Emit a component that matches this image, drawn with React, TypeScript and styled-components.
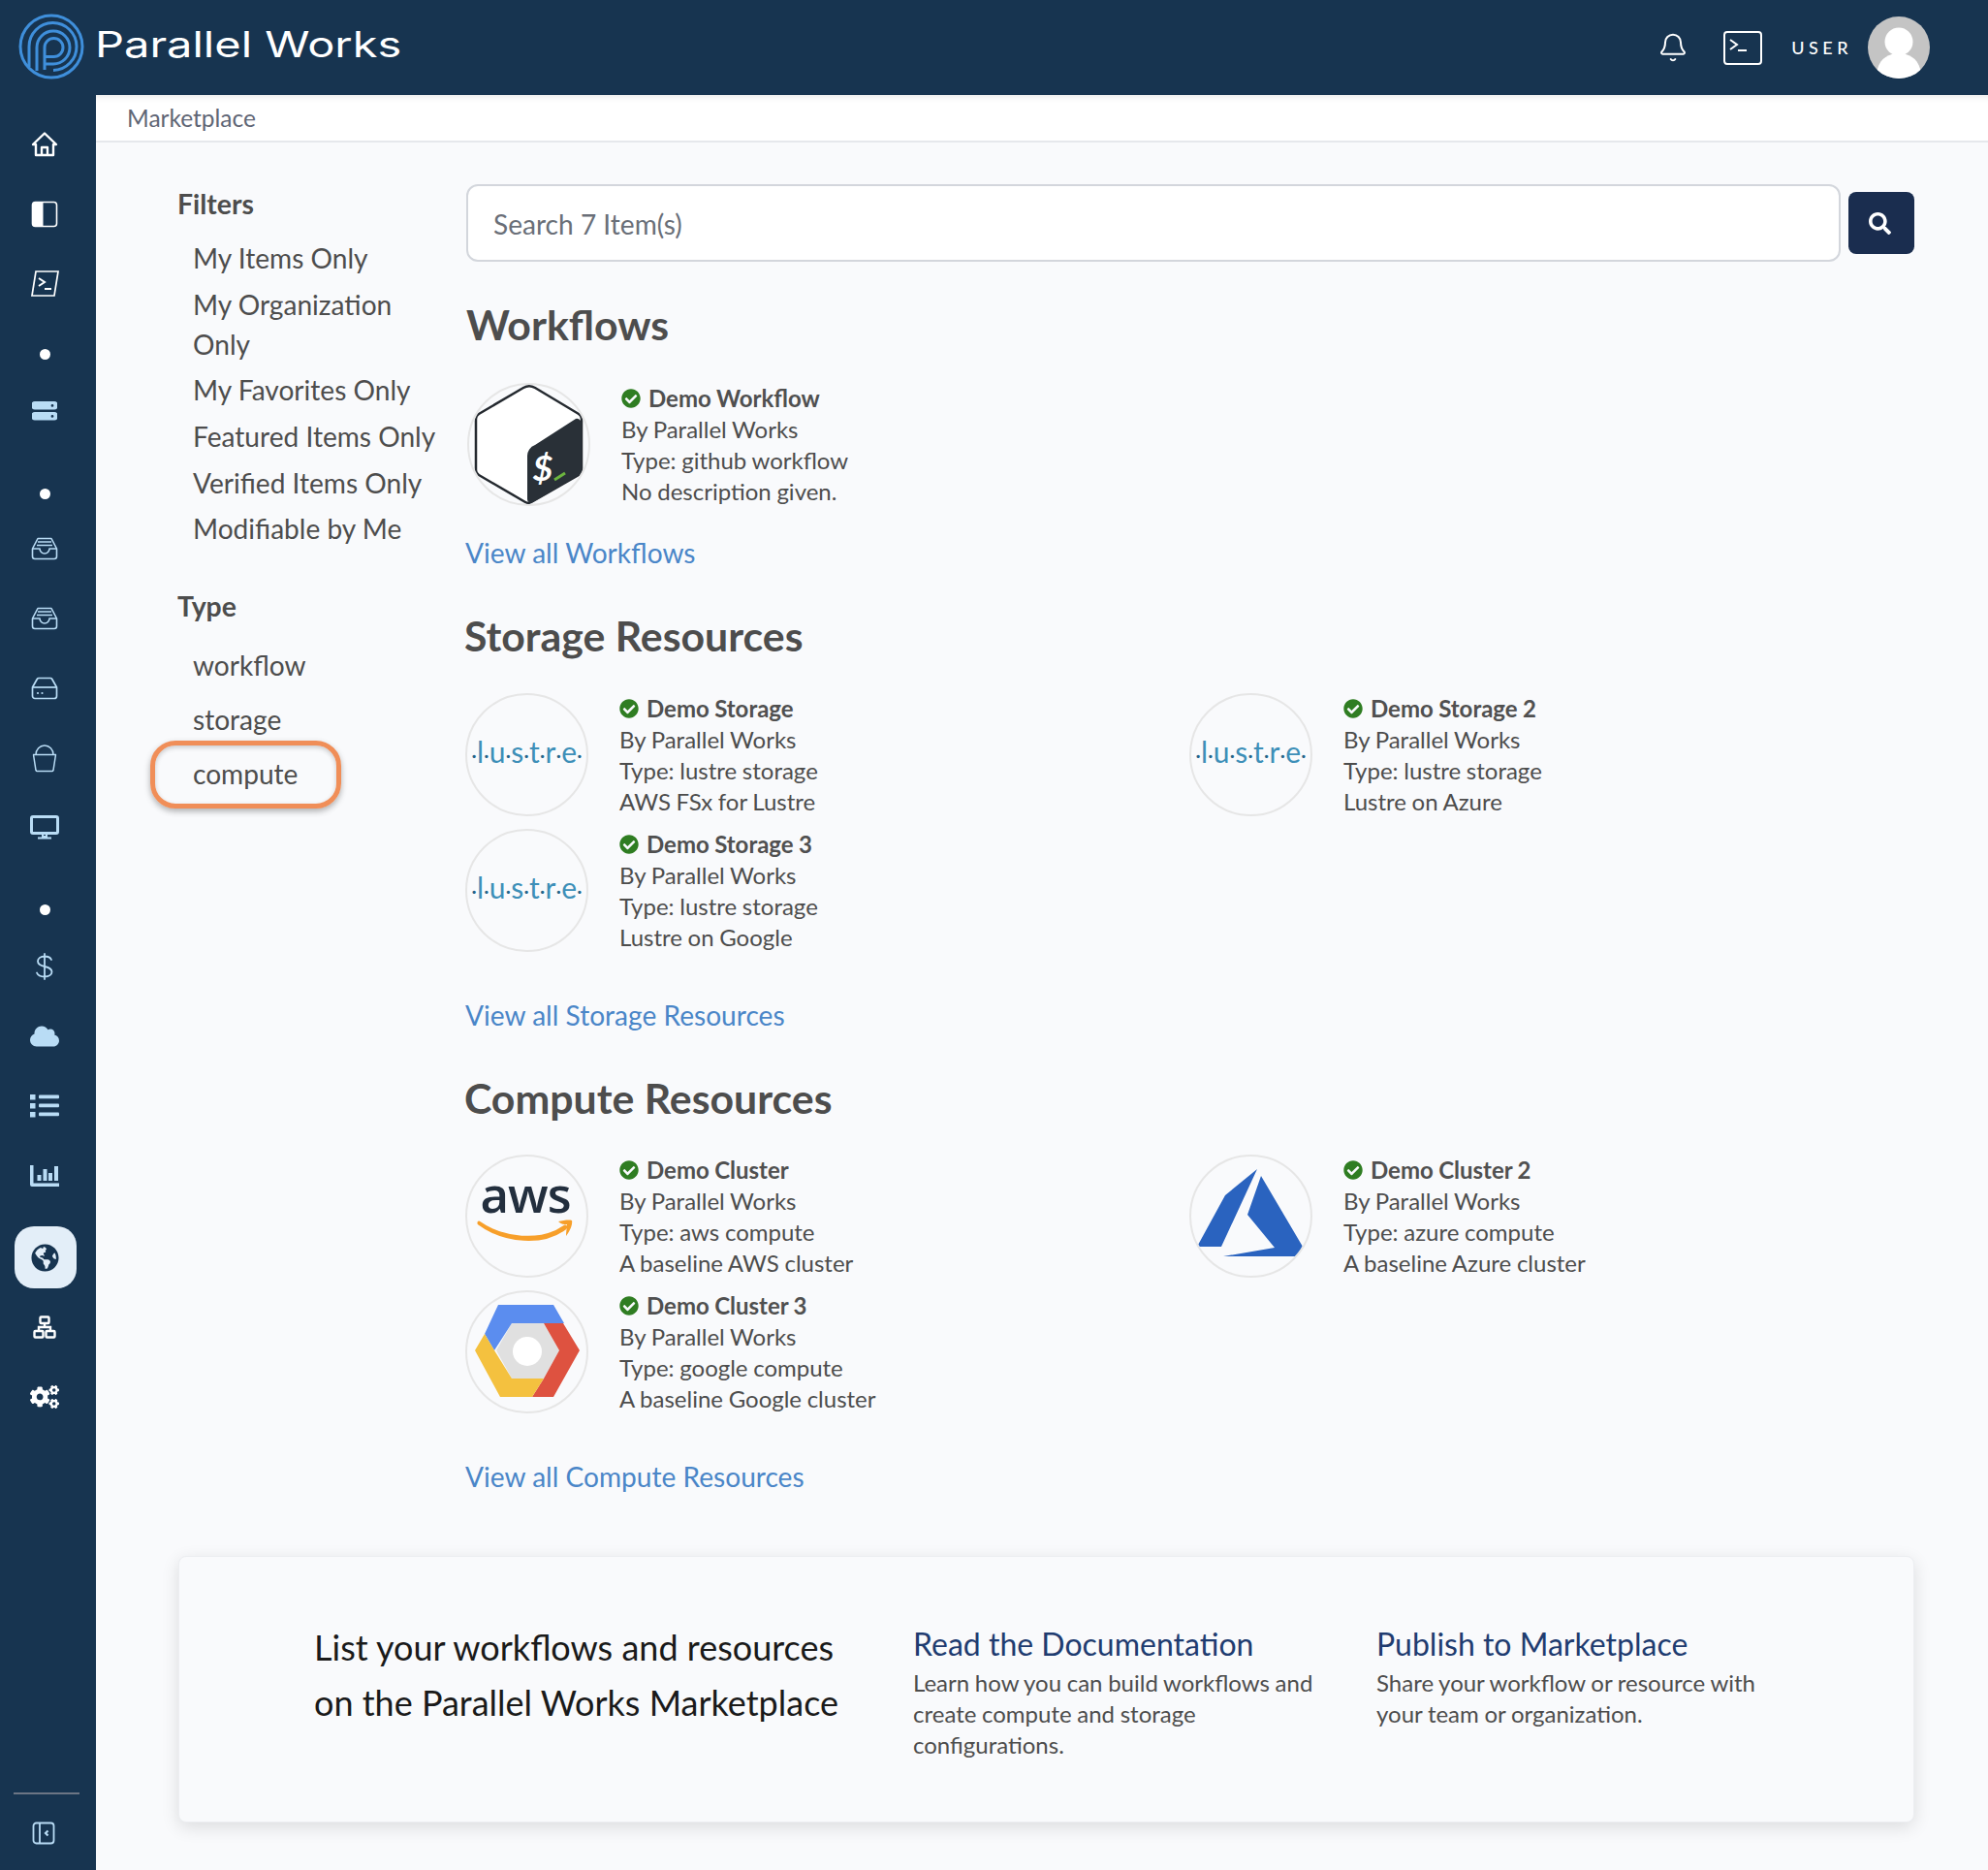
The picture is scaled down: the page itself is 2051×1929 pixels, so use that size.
import React from "react";
import styled, { createGlobalStyle } from "styled-components";
import { Bell } from "lucide-react";
import { FaCheckCircle, FaCloud, FaCogs, FaGlobeAmericas, FaSearch } from "react-icons/fa";

const GlobalStyle = createGlobalStyle`
  html, body {
    margin: 0;
    padding: 0;
    background: #f9fafc;
    font-family: "Lato", "Noto Sans", sans-serif;
  }
  *, *::before, *::after {
    box-sizing: border-box;
  }
`;

const Shell = styled.div`
  width: 2051px;
  height: 1929px;
  display: flex;
  flex-direction: column;
  overflow: hidden;
`;

const TopBar = styled.header`
  height: 98px;
  flex: none;
  background: #173450;
  display: flex;
  align-items: center;
  padding: 0 60px 0 19px;
`;

const LogoMark = styled.svg`
  width: 68px;
  height: 68px;
  flex: none;
  margin-top: -2px;
`;

const LogoText = styled.span`
  margin: -7px 0 0 11px;
  font-family: "Inter", sans-serif;
  font-size: 37px;
  font-weight: 400;
  color: #fff;
  white-space: nowrap;
  display: inline-block;
  transform: scaleX(1.27);
  transform-origin: left center;
`;

const TopRight = styled.div`
  margin-left: auto;
  display: flex;
  align-items: center;
`;

const BellButton = styled.div`
  color: #fff;
  display: flex;
  margin-right: 36px;
`;

const TerminalBox = styled.div`
  width: 40px;
  height: 35px;
  border: 2px solid #fff;
  border-radius: 4px;
  margin-right: 30px;
  display: flex;
`;

const UserName = styled.span`
  color: #fff;
  font-size: 18px;
  font-weight: 500;
  letter-spacing: 4.5px;
  margin-right: 16px;
`;

const Avatar = styled.div`
  width: 64px;
  height: 64px;
  border-radius: 50%;
  background: #c4c4c4;
  overflow: hidden;
`;

const Body = styled.div`
  flex: 1;
  display: flex;
  min-height: 0;
`;

const SideBar = styled.nav`
  width: 99px;
  flex: none;
  background: #173450;
  padding-top: 15px;
  display: flex;
  flex-direction: column;
  align-items: stretch;
`;

const NavRow = styled.div<{ $color?: string }>`
  height: 72px;
  width: 92px;
  display: flex;
  align-items: center;
  justify-content: center;
  color: ${(p) => p.$color || "#b9dcf5"};
`;

const NavDot = styled.div<{ $top: number; $bottom: number }>`
  width: 11px;
  height: 11px;
  border-radius: 50%;
  background: #fff;
  margin: ${(p) => p.$top}px 0 ${(p) => p.$bottom}px 41px;
`;

const ActivePill = styled.div`
  width: 64px;
  height: 64px;
  border-radius: 20px;
  background: #e3eef8;
  color: #173450;
  display: flex;
  align-items: center;
  justify-content: center;
  padding-right: 2px;
  margin: 16px 0 4px 15px;
`;

const NavFoot = styled.div`
  margin-top: auto;
  height: 80px;
  color: #b9dcf5;
`;

const NavDivider = styled.div`
  width: 68px;
  height: 2px;
  background: #6c7584;
  margin: 0 0 28px 14px;
`;

const CollapseSlot = styled.div`
  display: flex;
  margin-left: 33px;
`;

const Page = styled.main`
  flex: 1;
  min-width: 0;
  display: flex;
  flex-direction: column;
`;

const Crumbs = styled.div`
  height: 49px;
  flex: none;
  background: #fff;
  border-bottom: 2px solid #e6e8ec;
  box-shadow: inset 0 8px 8px -8px rgba(0, 0, 0, 0.14);
  padding-left: 32px;
  font-size: 24.5px;
  line-height: 47px;
  color: #5f6675;
`;

const Content = styled.div`
  display: grid;
  grid-template-columns: 296px 1fr;
  padding: 43px 76px 0 84px;
  color: #4d4d4d;
`;

const FilterColumn = styled.aside`
  display: flex;
  flex-direction: column;
`;

const FilterTitle = styled.h4<{ $top?: number; $bottom: number }>`
  margin: ${(p) => p.$top || 0}px 0 ${(p) => p.$bottom}px;
  font-size: 28.4px;
  line-height: 41px;
  font-weight: 700;
  color: #4d4d4d;
`;

const FilterItem = styled.div`
  font-size: 28.1px;
  line-height: 41px;
  margin-bottom: 6.7px;
  padding-left: 16px;
`;

const TypeItem = styled.div<{ $marked?: boolean }>`
  position: relative;
  height: 56px;
  line-height: 56px;
  font-size: 28.1px;
  padding-left: 16px;
  ${(p) =>
    p.$marked &&
    `
    &::after {
      content: "";
      position: absolute;
      left: -28px;
      top: -6px;
      width: 197px;
      height: 70px;
      border: 5px solid #f08e58;
      border-radius: 26px;
      box-shadow: 0 3px 6px rgba(0, 0, 0, 0.3), inset 0 2px 5px rgba(0, 0, 0, 0.2);
    }
  `}
`;

const Results = styled.section`
  min-width: 0;
`;

const SearchRow = styled.div`
  display: flex;
  align-items: center;
  gap: 8px;
  margin-left: 2px;
`;

const SearchInput = styled.div`
  flex: 1;
  height: 80px;
  background: #fff;
  border: 2px solid #d3d6dc;
  border-radius: 12px;
  padding-left: 26px;
  font-size: 28.1px;
  line-height: 78px;
  color: #6a6f78;
`;

const SearchButton = styled.button`
  width: 68px;
  height: 64px;
  border: 0;
  border-radius: 8px;
  background: #1a2d4f;
  color: #fff;
  display: flex;
  align-items: center;
  justify-content: center;
  padding: 0 4px 0 0;
`;

const SectionTitle = styled.h2<{ $top: number; $bottom: number; $inset?: number }>`
  margin: ${(p) => p.$top}px 0 ${(p) => p.$bottom}px ${(p) => p.$inset || 0}px;
  font-size: 42.8px;
  line-height: 60px;
  font-weight: 700;
  color: #4d4d4d;
`;

const CardGrid = styled.div<{ $inset?: number }>`
  display: grid;
  grid-template-columns: 747px 1fr;
  row-gap: 13px;
  margin-left: ${(p) => p.$inset || 0}px;
`;

const Card = styled.div`
  display: flex;
  align-items: flex-start;
  height: 127px;
`;

const Badge = styled.div`
  width: 127px;
  height: 127px;
  flex: none;
  border-radius: 50%;
  border: 2px solid #e6e6e6;
  position: relative;
  display: flex;
  align-items: center;
  justify-content: center;
  overflow: hidden;
`;

const BadgeArt = styled.svg`
  position: absolute;
  left: -2px;
  top: -2px;
  width: 127px;
  height: 127px;
`;

const LustreMark = styled.span`
  font-size: 30px;
  color: #3d8fb8;
  white-space: nowrap;
  margin-top: -7px;

  i {
    font-style: normal;
    color: #24658a;
    font-size: 22px;
  }
`;

const CardText = styled.div`
  margin-left: 32px;
  font-size: 24px;
  line-height: 32px;
  word-spacing: -0.5px;
  white-space: nowrap;
`;

const CardName = styled.div`
  display: flex;
  align-items: center;
  gap: 8px;
  font-weight: 700;
  color: #505050;
  svg {
    color: #2f7d22;
  }
`;

const ViewAll = styled.a<{ $top: number }>`
  display: block;
  margin-top: ${(p) => p.$top}px;
  padding-left: 1px;
  font-size: 28.1px;
  line-height: 36px;
  color: #4a86c8;
  text-decoration: none;
`;

const Promo = styled.section`
  grid-column: 1 / -1;
  height: 275px;
  margin: 64px 0 0 1px;
  background: #f9fafc;
  border: 1px solid #eceef1;
  border-radius: 8px;
  box-shadow: 0 5px 18px rgba(0, 0, 0, 0.12);
  display: grid;
  grid-template-columns: 618px 478px 1fr;
  padding: 65px 0 0 139px;
`;

const PromoLead = styled.div`
  font-size: 36px;
  line-height: 56.5px;
  color: #1a1a1a;
  white-space: nowrap;
`;

const PromoColumn = styled.div`
  padding-top: 3px;
`;

const PromoHeading = styled.h3`
  margin: 0 0 2px;
  font-size: 32px;
  line-height: 44px;
  font-weight: 400;
  color: #1f3c70;
`;

const PromoText = styled.p`
  margin: 0;
  width: 430px;
  font-size: 24px;
  line-height: 32px;
  word-spacing: -0.5px;
  color: #4d4d4d;
`;

const HomeIcon = () => (
  <svg width="28" height="28" viewBox="0 0 28 28" fill="none" stroke="currentColor" strokeWidth="2.4" strokeLinejoin="round">
    <path d="M2 14 14 2.5 26 14h-3v11H5V14z" />
    <path d="M11 25v-8h6v8" />
  </svg>
);

const PanelIcon = () => (
  <svg width="28" height="28" viewBox="0 0 28 28" fill="none">
    <rect x="1.5" y="1.5" width="25" height="25" rx="3" stroke="#fff" strokeWidth="1.6" />
    <path d="M4 1.5h8.5v25H4a2.5 2.5 0 0 1-2.5-2.5V4A2.5 2.5 0 0 1 4 1.5z" fill="#fff" />
  </svg>
);

const SlantTerminalIcon = () => (
  <svg width="30" height="30" viewBox="0 0 30 30" fill="none" stroke="currentColor" strokeWidth="1.7">
    <path d="M6 2h23l-4 25H2z" />
    <path d="M9 9l6 4-6 4M15 20h7" strokeWidth="2" />
  </svg>
);

const ServerIcon = () => (
  <svg width="26" height="20" viewBox="0 0 26 20" fill="currentColor">
    <path fillRule="evenodd" d="M3 0h20a3 3 0 0 1 0 8.5H3A3 3 0 0 1 3 0zm18 3a1.4 1.4 0 1 0 0 2.8A1.4 1.4 0 0 0 21 3zM3 11h20a3 3 0 0 1 0 8.5H3A3 3 0 0 1 3 11zm18 3a1.4 1.4 0 1 0 0 2.8 1.4 1.4 0 0 0 0-2.8z" />
  </svg>
);

const TrayIcon = () => (
  <svg width="28" height="24" viewBox="0 0 28 24" fill="none" stroke="currentColor" strokeWidth="1.6" strokeLinejoin="round">
    <path d="M7 1.5h14l5.5 10.5V20a2.5 2.5 0 0 1-2.5 2.500H4A2.500 2.500 0 0 1 1.500 20v-8z" />
    <path d="M1.500 12H9a5 5 0 0 0 10 0h7.500M7 5h14M6 8.500h16" />
  </svg>
);

const DriveIcon = () => (
  <svg width="28" height="24" viewBox="0 0 28 24" fill="none" stroke="currentColor" strokeWidth="1.7" strokeLinejoin="round">
    <path d="M8 1.500h12a2 2 0 0 1 1.700 1L26.500 11v9a2.500 2.500 0 0 1-2.500 2.500H4A2.500 2.500 0 0 1 1.500 20v-9l4.800-8.500a2 2 0 0 1 1.700-1z" />
    <path d="M1.500 11h25" />
    <circle cx="7" cy="17" r="1.100" fill="currentColor" stroke="none" />
    <circle cx="11.500" cy="17" r="1.100" fill="currentColor" stroke="none" />
  </svg>
);

const BucketIcon = () => (
  <svg width="26" height="30" viewBox="0 0 26 30" fill="none" stroke="currentColor" strokeWidth="1.5">
    <path d="M1 11.500h24M4 11.500a9 9.500 0 0 1 18 0" />
    <path d="M1.500 11.500 4 27.500a1.500 1.500 0 0 0 1.500 1h15a1.500 1.500 0 0 0 1.500-1l2.500-16" />
  </svg>
);

const MonitorIcon = () => (
  <svg width="30" height="26" viewBox="0 0 30 26" fill="none" stroke="currentColor">
    <rect x="1.500" y="1.500" width="27" height="17" rx="1.500" strokeWidth="3" />
    <path d="M13 19h4v3h-4zM8 23.500h14" strokeWidth="2" />
  </svg>
);

const DollarIcon = () => (
  <svg width="20" height="28" viewBox="0 0 20 28" fill="none" stroke="currentColor" strokeWidth="1.800" strokeLinecap="round">
    <path d="M10 1v26M17 7c-1-2.500-3.500-3.500-7-3.500-4 0-7 2-7 5s2.500 4.500 7 5.500 7.500 2.500 7.500 5.500-3 5-7.500 5c-4 0-7-1.500-8-4" />
  </svg>
);

const ListIcon = () => (
  <svg width="30" height="24" viewBox="0 0 30 24" fill="currentColor">
    <rect x="0" y="0" width="5.500" height="5.500" />
    <rect x="0" y="9" width="5.500" height="5.500" />
    <rect x="0" y="18" width="5.500" height="5.500" />
    <rect x="9" y="0.500" width="21" height="3.800" rx="1" />
    <rect x="9" y="9.500" width="21" height="3.800" rx="1" />
    <rect x="9" y="18.500" width="21" height="3.800" rx="1" />
  </svg>
);

const BarsIcon = () => (
  <svg width="30" height="23" viewBox="0 0 30 23" fill="currentColor">
    <path d="M0 0h3.500v18.500H30V22H2a2 2 0 0 1-2-2z" />
    <rect x="7.500" y="10" width="4" height="6" />
    <rect x="13.500" y="4" width="4" height="12" />
    <rect x="19" y="8" width="4" height="8" />
    <rect x="25" y="1" width="4" height="15" />
  </svg>
);

const SitemapIcon = () => (
  <svg width="24" height="24" viewBox="0 0 24 24" fill="none" stroke="currentColor" strokeWidth="2.400">
    <rect x="7.500" y="1.500" width="9" height="6.500" rx="1" />
    <rect x="1.500" y="16" width="9" height="6.500" rx="1" />
    <rect x="13.500" y="16" width="9" height="6.500" rx="1" />
    <path d="M12 8v4M6 16v-4h12v4" />
  </svg>
);

const CollapseIcon = () => (
  <svg width="24" height="24" viewBox="0 0 24 24" fill="none" stroke="currentColor" strokeWidth="1.800">
    <rect x="1.500" y="1.500" width="21" height="21" rx="3" />
    <path d="M8 1.500v21" />
    <path d="M16.500 9.500 14 12l2.500 2.500" strokeWidth="2.200" />
  </svg>
);

const BashArt = () => (
  <BadgeArt viewBox="0 0 127 127">
    <path d="M58 5 12 32a6 6 0 0 0-3 5v53a6 6 0 0 0 3 5l48 28a6 6 0 0 0 6 0l49-28a6 6 0 0 0 3-5V37a6 6 0 0 0-3-5L70 5a12 12 0 0 0-12 0z" fill="#fff" stroke="#24292f" strokeWidth="2.500" />
    <path d="M70 64 112 37a5 5 0 0 1 6 4v49a6 6 0 0 1-3 5L68 123c-3 1.500-6 0-6-3V76a12 12 0 0 1 8-12z" fill="#293037" />
    <text x="78" y="101" textAnchor="middle" fontFamily="Lato, sans-serif" fontWeight="700" fontStyle="italic" fontSize="36" fill="#fff">$</text>
    <path d="M90 100 101 93" stroke="#6cb43f" strokeWidth="3" />
  </BadgeArt>
);

const AwsArt = () => (
  <BadgeArt viewBox="0 0 127 127">
    <text x="62" y="60" textAnchor="middle" fontFamily="'Open Sans', sans-serif" fontWeight="600" fontSize="51" letterSpacing="-1" fill="#232f3e">aws</text>
    <path d="M14 70C38 87 78 92 103 74c1 0 1 1 0 2-22 17-62 15-89-5z" fill="#f79f2a" stroke="#f79f2a" strokeWidth="3" strokeLinejoin="round" />
    <path d="M96 69c5-1 11-2 14-1 1 4-2 11-6 16 0-5 1-9 1-12-3 0-6 0-9-3z" fill="#f79f2a" />
  </BadgeArt>
);

const AzureArt = () => (
  <BadgeArt viewBox="0 0 127 127">
    <path d="M70 15 37 42 8 95h25zM74 22 60 62l28 34-53 9h75l7-10z" fill="#2a63bf" />
  </BadgeArt>
);

const GoogleArt = () => (
  <BadgeArt viewBox="0 0 127 127">
    <path d="M48 34h33l16 28-16 29H48L32 62z" fill="#e0e0e0" />
    <path d="M34 15h57l11 19H48L30 62 20 45z" fill="#5b8def" strokeLinejoin="round" />
    <path d="M81 34h20l17 28-27 48H69l12-19 16-29z" fill="#de5240" />
    <path d="M20 45l10 17 18 29h33l-12 19H36L10 62z" fill="#f4c13f" />
    <circle cx="64" cy="63" r="15" fill="#fff" />
  </BadgeArt>
);

const Lustre = () => (
  <LustreMark>
    <i>·</i>l<i>·</i>u<i>·</i>s<i>·</i>t<i>·</i>r<i>·</i>e<i>·</i>
  </LustreMark>
);

type Item = { name: string; type: string; desc: string; art: React.ReactNode };

const storageItems: Item[] = [
  { name: "Demo Storage", type: "lustre storage", desc: "AWS FSx for Lustre", art: <Lustre /> },
  { name: "Demo Storage 2", type: "lustre storage", desc: "Lustre on Azure", art: <Lustre /> },
  { name: "Demo Storage 3", type: "lustre storage", desc: "Lustre on Google", art: <Lustre /> },
];

const computeItems: Item[] = [
  { name: "Demo Cluster", type: "aws compute", desc: "A baseline AWS cluster", art: <AwsArt /> },
  { name: "Demo Cluster 2", type: "azure compute", desc: "A baseline Azure cluster", art: <AzureArt /> },
  { name: "Demo Cluster 3", type: "google compute", desc: "A baseline Google cluster", art: <GoogleArt /> },
];

const ItemCard = ({ item }: { item: Item }) => (
  <Card>
    <Badge>{item.art}</Badge>
    <CardText>
      <CardName>
        <FaCheckCircle size={20} />
        {item.name}
      </CardName>
      <div>By Parallel Works</div>
      <div>Type: {item.type}</div>
      <div>{item.desc}</div>
    </CardText>
  </Card>
);

const App: React.FC = () => {
  return (
    <Shell>
      <GlobalStyle />
      <TopBar>
        <LogoMark viewBox="-34 -34 68 68" fill="none" stroke="#3f8fdb" strokeWidth="3">
          <circle r="32" />
          <path d="M-23 21V0A24.500 24.500 0 1 1 2 24.500" />
          <path d="M-15 25V1A17 17 0 1 1 2 18H-7" />
          <path d="M-7 24V1A9.500 9.500 0 1 1 2.500 10.500H-7" />
        </LogoMark>
        <LogoText>Parallel Works</LogoText>
        <TopRight>
          <BellButton>
            <Bell size={32} strokeWidth={1.5} />
          </BellButton>
          <TerminalBox>
            <svg width="36" height="31" viewBox="0 0 36 31" fill="none" stroke="#fff" strokeWidth="2">
              <path d="M5 7l7 5-7 5M13 18h9" />
            </svg>
          </TerminalBox>
          <UserName>USER</UserName>
          <Avatar>
            <svg width="64" height="64" viewBox="0 0 64 64" fill="#fff">
              <circle cx="32" cy="26" r="14.500" />
              <path d="M10 54c3-11 12-16 22-16s19 5 22 16v10H10z" />
            </svg>
          </Avatar>
        </TopRight>
      </TopBar>
      <Body>
        <SideBar>
          <NavRow $color="#fff"><HomeIcon /></NavRow>
          <NavRow $color="#fff"><PanelIcon /></NavRow>
          <NavRow $color="#fff"><SlantTerminalIcon /></NavRow>
          <NavDot $top={31} $bottom={17} />
          <NavRow><ServerIcon /></NavRow>
          <NavDot $top={44} $bottom={15} />
          <NavRow><TrayIcon /></NavRow>
          <NavRow><TrayIcon /></NavRow>
          <NavRow><DriveIcon /></NavRow>
          <NavRow><BucketIcon /></NavRow>
          <NavRow><MonitorIcon /></NavRow>
          <NavDot $top={43} $bottom={17} />
          <NavRow><DollarIcon /></NavRow>
          <NavRow><FaCloud size={30} /></NavRow>
          <NavRow><ListIcon /></NavRow>
          <NavRow><BarsIcon /></NavRow>
          <ActivePill><FaGlobeAmericas size={29} /></ActivePill>
          <NavRow $color="#fff"><SitemapIcon /></NavRow>
          <NavRow $color="#fff"><FaCogs size={30} /></NavRow>
          <NavFoot>
            <NavDivider />
            <CollapseSlot>
              <CollapseIcon />
            </CollapseSlot>
          </NavFoot>
        </SideBar>
        <Page>
          <Crumbs>Marketplace</Crumbs>
          <Content>
            <FilterColumn>
              <FilterTitle $bottom={15}>Filters</FilterTitle>
              <FilterItem>My Items Only</FilterItem>
              <FilterItem>
                My Organization
                <br />
                Only
              </FilterItem>
              <FilterItem>My Favorites Only</FilterItem>
              <FilterItem>Featured Items Only</FilterItem>
              <FilterItem>Verified Items Only</FilterItem>
              <FilterItem>Modifiable by Me</FilterItem>
              <FilterTitle $top={32} $bottom={12}>Type</FilterTitle>
              <TypeItem>workflow</TypeItem>
              <TypeItem>storage</TypeItem>
              <TypeItem $marked>compute</TypeItem>
            </FilterColumn>
            <Results>
              <SearchRow>
                <SearchInput>Search 7 Item(s)</SearchInput>
                <SearchButton>
                  <FaSearch size={23} />
                </SearchButton>
              </SearchRow>
              <SectionTitle $top={35} $bottom={30} $inset={2}>Workflows</SectionTitle>
              <CardGrid $inset={3}>
                <ItemCard
                  item={{ name: "Demo Workflow", type: "github workflow", desc: "No description given.", art: <BashArt /> }}
                />
              </CardGrid>
              <ViewAll $top={30}>View all Workflows</ViewAll>
              <SectionTitle $top={38} $bottom={29}>Storage Resources</SectionTitle>
              <CardGrid $inset={1}>
                {storageItems.map((it) => (
                  <ItemCard key={it.name} item={it} />
                ))}
              </CardGrid>
              <ViewAll $top={47}>View all Storage Resources</ViewAll>
              <SectionTitle $top={38} $bottom={28}>Compute Resources</SectionTitle>
              <CardGrid $inset={1}>
                {computeItems.map((it) => (
                  <ItemCard key={it.name} item={it} />
                ))}
              </CardGrid>
              <ViewAll $top={47}>View all Compute Resources</ViewAll>
            </Results>
            <Promo>
              <PromoLead>
                List your workflows and resources
                <br />
                on the Parallel Works Marketplace
              </PromoLead>
              <PromoColumn>
                <PromoHeading>Read the Documentation</PromoHeading>
                <PromoText>
                  Learn how you can build workflows and create compute and storage configurations.
                </PromoText>
              </PromoColumn>
              <PromoColumn>
                <PromoHeading>Publish to Marketplace</PromoHeading>
                <PromoText>Share your workflow or resource with your team or organization.</PromoText>
              </PromoColumn>
            </Promo>
          </Content>
        </Page>
      </Body>
    </Shell>
  );
};

export default App;
